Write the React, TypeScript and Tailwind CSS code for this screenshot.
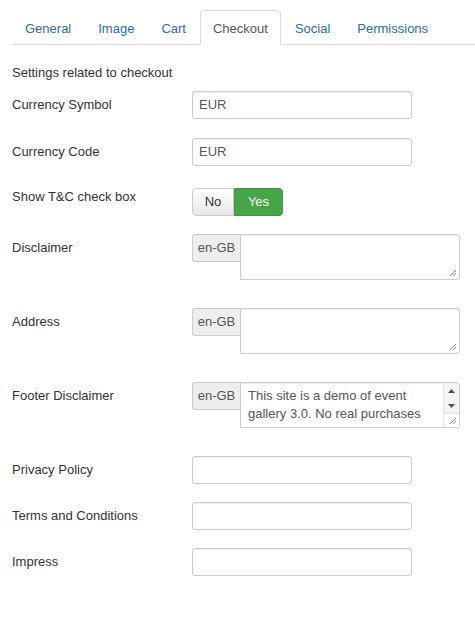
import React from "react";

const tabs = ["General", "Image", "Cart", "Checkout", "Social", "Permissions"];

function Grip() {
  return (
    <svg className="absolute bottom-[2px] right-[2px]" width="8" height="8" viewBox="0 0 8 8">
      <path d="M7 1 L1 7 M7 4 L4 7" stroke="#888" strokeWidth="1" fill="none" />
    </svg>
  );
}

function TextInput({ value = "" }: { value?: string }) {
  return (
    <div className="h-[28px] w-[220px] rounded-[3px] border border-[#ccc] bg-white px-[6px] text-[13px] leading-[26px] text-[#555] shadow-[inset_0_1px_1px_rgba(0,0,0,0.075)]">
      {value}
    </div>
  );
}

function LangTextarea({ text }: { text?: string[] }) {
  return (
    <div className="flex items-start">
      <div className="h-[28px] w-[48px] rounded-l-[3px] border border-r-0 border-[#ccc] bg-[#eee] text-center text-[13px] leading-[26px] text-[#555]">
        en-GB
      </div>
      <div className="relative h-[46px] w-[220px] rounded-r-[3px] border border-[#ccc] bg-white shadow-[inset_0_1px_1px_rgba(0,0,0,0.075)]">
        {text && (
          <>
            <div className="px-[7px] pt-[4px] text-[13px] leading-[18px] text-[#555]">
              {text.map((t) => (
                <div key={t} className="whitespace-nowrap">{t}</div>
              ))}
            </div>
            <div className="absolute right-0 top-0 flex h-full w-[16px] flex-col border-l border-[#e5e5e5] bg-[#f4f4f4]">
              <div className="flex h-[15px] items-center justify-center">
                <svg width="7" height="4" viewBox="0 0 7 4"><path d="M3.5 0 L7 4 L0 4 Z" fill="#505050" /></svg>
              </div>
              <div className="flex h-[15px] items-center justify-center">
                <svg width="7" height="4" viewBox="0 0 7 4"><path d="M0 0 L7 0 L3.5 4 Z" fill="#505050" /></svg>
              </div>
              <div className="flex-1 border-t border-[#e5e5e5] bg-white" />
            </div>
          </>
        )}
        <Grip />
      </div>
    </div>
  );
}

function Row({ label, children, className = "", labelClass = "pt-[5px]" }: { label: string; children: React.ReactNode; className?: string; labelClass?: string }) {
  return (
    <div className={"flex " + className}>
      <div className={"w-[180px] shrink-0 text-[13px] leading-[18px] text-[#333] " + labelClass}>{label}</div>
      {children}
    </div>
  );
}

export default function App() {
  return (
    <div className="min-h-[618px] bg-white pl-[12px] pt-[10px]" style={{ fontFamily: '"Liberation Sans", Arial, sans-serif' }}>
      {/* Tabs */}
      <div className="flex border-b border-[#ddd]">
        {tabs.map((t) =>
          t === "Checkout" ? (
            <div key={t} className="-mb-px mr-[1px] rounded-t-[4px] border border-[#ddd] border-b-white bg-white px-[12px] pb-[4px] pt-[8px] text-[13px] leading-[20px] text-[#555]">
              {t}
            </div>
          ) : (
            <div key={t} className="mr-[1px] border border-transparent px-[12px] pb-[4px] pt-[8px] text-[13px] leading-[20px] text-[#2d6ca8]">
              {t}
            </div>
          )
        )}
      </div>

      <div className="mt-[19px] text-[13px] leading-[18px] text-[#333]">Settings related to checkout</div>

      <div className="mt-[9px]">
        <Row label="Currency Symbol" className="mb-[19px]">
          <TextInput value="EUR" />
        </Row>
        <Row label="Currency Code" className="mb-[22px]">
          <TextInput value="EUR" />
        </Row>
        <Row label="Show T&C check box" className="mb-[18px]" labelClass="pt-0">
          <div className="flex h-[28px] text-[13px]">
            <div className="flex w-[42px] items-center justify-center rounded-l-[4px] border border-[#ccc] bg-gradient-to-b from-white to-[#e6e6e6] text-[#333]">
              No
            </div>
            <div className="flex w-[49px] items-center justify-center rounded-r-[4px] border border-[#3f943f] bg-[#46a546] text-white">
              Yes
            </div>
          </div>
        </Row>
        <Row label="Disclaimer" className="mb-[28px]">
          <LangTextarea />
        </Row>
        <Row label="Address" className="mb-[28px]">
          <LangTextarea />
        </Row>
        <Row label="Footer Disclaimer" className="mb-[28px]">
          <LangTextarea text={["This site is a demo of event", "gallery 3.0. No real purchases"]} />
        </Row>
        <Row label="Privacy Policy" className="mb-[18px]">
          <TextInput />
        </Row>
        <Row label="Terms and Conditions" className="mb-[18px]">
          <TextInput />
        </Row>
        <Row label="Impress">
          <TextInput />
        </Row>
      </div>
    </div>
  );
}
